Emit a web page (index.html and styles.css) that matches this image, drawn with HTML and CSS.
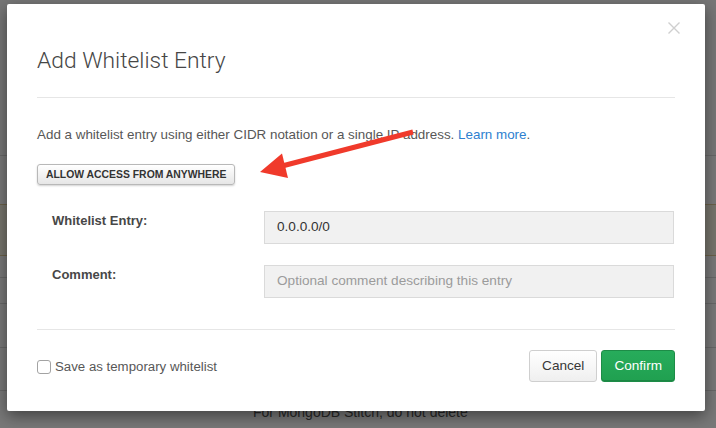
FILE: index.html
```html
<!DOCTYPE html>
<html>
<head>
<meta charset="utf-8">
<link rel="stylesheet" href="styles.css">
</head>
<body>
<div class="page">
  <div class="page-head"></div>
  <div class="row row-a"></div>
  <div class="row row-b row-warn"></div>
  <div class="row row-c row-warn-edge"></div>
  <div class="row row-d"></div>
  <div class="row row-e"></div>
  <div class="row row-f"></div>
  <div class="row row-g"><span class="note">For MongoDB Stitch, do not delete</span></div>
</div>
<div class="backdrop"></div>

<div class="modal">
  <button class="close" type="button" aria-label="Close">
    <svg width="12" height="12" viewBox="0 0 12 12"><path d="M0.5 0.5 L11.5 11.5 M11.5 0.5 L0.5 11.5" stroke="#cfcfcf" stroke-width="1.4" fill="none"/></svg>
  </button>
  <div class="modal-header">
    <h2 class="modal-title">Add Whitelist Entry</h2>
  </div>
  <div class="modal-body">
    <p class="desc">Add a whitelist entry using either CIDR notation or a single IP address. <a class="link" href="#">Learn more</a>.</p>
    <button class="btn-allow" type="button">ALLOW ACCESS FROM ANYWHERE</button>
    <div class="form">
      <div class="form-row">
        <label class="form-label">Whitelist Entry:</label>
        <div class="input">0.0.0.0/0</div>
      </div>
      <div class="form-row">
        <label class="form-label">Comment:</label>
        <div class="input placeholder">Optional comment describing this entry</div>
      </div>
    </div>
  </div>
  <div class="modal-footer">
    <label class="check">
      <span class="check-box"></span>
      <span class="check-text">Save as temporary whitelist</span>
    </label>
    <div class="actions">
      <button class="btn btn-cancel" type="button">Cancel</button>
      <button class="btn btn-confirm" type="button">Confirm</button>
    </div>
  </div>
</div>

<svg class="annot" width="716" height="428" viewBox="0 0 716 428">
  <line x1="284" y1="165.5" x2="413" y2="132" stroke="#f03a2b" stroke-width="5" stroke-linecap="butt"/>
  <polygon points="260,172 282,153.5 288,178" fill="#f03a2b"/>
</svg>
</body>
</html>
```

FILE: styles.css
```css
html, body {
  margin: 0;
  padding: 0;
}
body {
  width: 716px;
  height: 428px;
  overflow: hidden;
  position: relative;
  font-family: "Liberation Sans", Arial, sans-serif;
  background: #ffffff;
}

/* underlying page */
.page {
  display: flex;
  flex-direction: column;
}
.page-head { height: 155px; background: #fafafa; }
.row {
  box-sizing: border-box;
  border-top: 1px solid #dcdcdc;
  background: #ffffff;
}
.row-a { height: 49px; }
.row-b { height: 51px; }
.row-warn { background: #fbf7e6; border-top-color: #e2cf9c; }
.row-warn-edge { border-top-color: #e2cf9c; }
.row-c { height: 22px; }
.row-d { height: 26px; }
.row-e { height: 44px; }
.row-f { height: 43px; }
.row-g { height: 40px; padding: 12px 0 0 253px; }
.note {
  font-size: 14px;
  line-height: 16px;
  color: #555;
}

.backdrop {
  position: absolute;
  inset: 0;
  background: rgba(0, 0, 0, 0.53);
}

/* modal */
.modal {
  position: absolute;
  left: 7px;
  top: 4px;
  width: 698px;
  box-sizing: border-box;
  padding: 0 30px;
  background: #fff;
  border-radius: 2px;
  box-shadow: 0 5px 15px rgba(0, 0, 0, 0.45);
}
.close {
  position: absolute;
  left: 661px;
  top: 18px;
  width: 12px;
  height: 12px;
  padding: 0;
  border: 0;
  background: none;
  display: block;
}
.close svg { display: block; }

.modal-header {
  padding: 44px 0 23px;
  border-bottom: 1px solid #e6e6e6;
}
.modal-title {
  margin: 0;
  font-family: Roboto, "Liberation Sans", sans-serif;
  font-weight: 300;
  font-size: 22.8px;
  line-height: 26px;
  color: #464646;
}

.modal-body {
  padding: 28px 0 31px;
  border-bottom: 1px solid #e6e6e6;
}
.desc {
  margin: 0;
  font-size: 13.4px;
  line-height: 18px;
  color: #575757;
}
.link {
  color: #2e7fcf;
  text-decoration: none;
}
.btn-allow {
  display: block;
  margin-top: 20px;
  height: 21px;
  box-sizing: border-box;
  padding: 0 8px;
  border: 1px solid #b8b8b8;
  border-radius: 3px;
  background: linear-gradient(#ffffff, #e6e6e6);
  box-shadow: 0 1px 2px rgba(0, 0, 0, 0.18);
  font-family: "Liberation Sans", Arial, sans-serif;
  font-weight: bold;
  font-size: 10.4px;
  line-height: 19px;
  color: #333;
}

.form {
  margin-top: 26px;
  display: flex;
  flex-direction: column;
  gap: 21px;
}
.form-row {
  display: flex;
  align-items: flex-start;
}
.form-label {
  width: 227px;
  box-sizing: border-box;
  padding: 1px 0 0 15px;
  font-size: 13px;
  line-height: 18px;
  font-weight: bold;
  color: #474747;
}
.input {
  width: 410px;
  height: 33px;
  box-sizing: border-box;
  border: 1px solid #dadada;
  background: #f1f1f1;
  padding: 0 12px 2px;
  font-size: 13.6px;
  line-height: 29px;
  color: #333;
}
.placeholder { color: #9b9b9b; }

.modal-footer {
  display: flex;
  justify-content: space-between;
  align-items: center;
  padding: 20px 0 29px;
}
.check {
  display: flex;
  align-items: center;
  gap: 4px;
  padding-top: 1px;
}
.check-box {
  width: 14px;
  height: 14px;
  box-sizing: border-box;
  border: 1px solid #a3a3a3;
  border-radius: 3px;
  background: #fff;
}
.check-text {
  font-size: 13.25px;
  line-height: 16px;
  color: #575757;
}
.actions {
  display: flex;
  gap: 4px;
}
.btn {
  height: 32px;
  box-sizing: border-box;
  padding: 0 12px;
  border-radius: 3px;
  font-family: "Liberation Sans", Arial, sans-serif;
  font-size: 13.6px;
  line-height: 30px;
}
.btn-cancel {
  border: 1px solid #cfcfcf;
  background: linear-gradient(#ffffff, #efefef);
  color: #383838;
}
.btn-confirm {
  border: 1px solid #1d8c47;
  background: linear-gradient(#27ac5b, #20a050);
  box-shadow: inset 0 -1px 0 #1c8744;
  color: #fff;
}

.annot {
  position: absolute;
  left: 0;
  top: 0;
  pointer-events: none;
}
```
